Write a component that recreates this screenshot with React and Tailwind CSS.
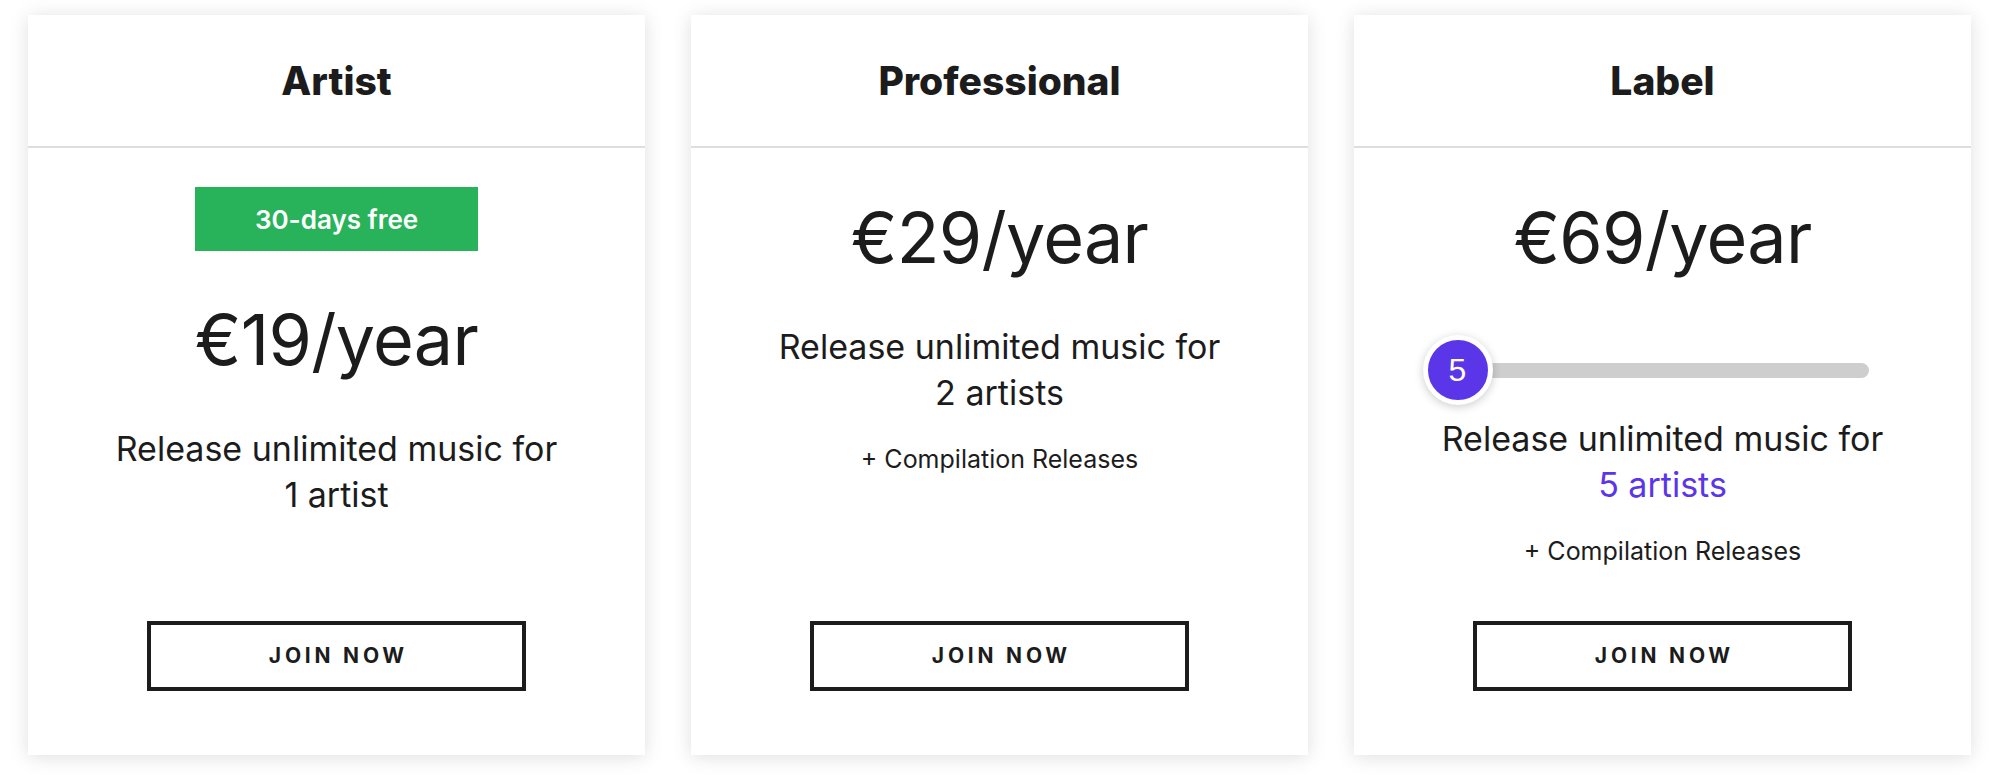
import React from 'react';

const font = { fontFamily: 'Inter, "Noto Sans", sans-serif' };

const JoinButton = () => (
  <button className="mt-auto mb-[64px] w-[379px] h-[70px] border-[4px] border-[#1c1c1c] bg-white flex items-center justify-center">
    <span className="text-[21px] font-bold tracking-[0.18em] text-[#1c1c1c] pl-[0.18em]">JOIN NOW</span>
  </button>
);

const Card = ({ title, children }) => (
  <div className="flex-1 bg-white flex flex-col shadow-[0_2px_18px_rgba(0,0,0,0.13)] h-[740px]">
    <div className="h-[133px] border-b-2 border-[#dedede] flex items-center justify-center">
      <h2 className="text-[39px] font-extrabold text-[#1c1c1c] leading-none">{title}</h2>
    </div>
    <div className="flex-1 flex flex-col items-center text-center text-[#1c1c1c]">
      {children}
      <JoinButton />
    </div>
  </div>
);

const Price = ({ amount, className = '' }) => (
  <div className={`text-[70px] leading-[84px] font-normal tracking-[-0.01em] ${className}`}>{amount}/year</div>
);

const App = () => {
  return (
    <div className="w-[1999px] h-[775px] bg-white pt-[15px] px-[28px] flex gap-[46px]" style={font}>
      <Card title="Artist">
        <div className="mt-[39px] w-[283px] h-[64px] bg-[#28b35b] flex items-center justify-center">
          <span className="text-white text-[26px] font-semibold">30-days free</span>
        </div>
        <Price amount="€19" className="mt-[47px]" />
        <p className="mt-[44px] text-[34px] leading-[46px]">
          Release unlimited music for<br />1 artist
        </p>
      </Card>

      <Card title="Professional">
        <Price amount="€29" className="mt-[48px]" />
        <p className="mt-[44px] text-[34px] leading-[46px]">
          Release unlimited music for<br />2 artists
        </p>
        <p className="mt-[29px] text-[25px] leading-[28px]">+ Compilation Releases</p>
      </Card>

      <Card title="Label">
        <Price amount="€69" className="mt-[48px]" />
        <div className="relative mt-[55px] mr-[34px] w-[446px] h-[70px] flex items-center">
          <div className="w-full h-[15px] rounded-full bg-[#cecece]" />
          <div className="absolute left-0 top-0 w-[70px] h-[70px] rounded-full bg-[#5b36e8] border-[5px] border-white shadow-[0_2px_10px_rgba(0,0,0,0.2)] flex items-center justify-center">
            <span className="text-white text-[32px] leading-none" style={{ fontFamily: '"Liberation Sans", Arial, sans-serif' }}>5</span>
          </div>
        </div>
        <p className="mt-[11px] text-[34px] leading-[46px]">
          Release unlimited music for<br />
          <span className="text-[#5b36e8]">5 artists</span>
        </p>
        <p className="mt-[29px] text-[25px] leading-[28px]">+ Compilation Releases</p>
      </Card>
    </div>
  );
};

export default App;
